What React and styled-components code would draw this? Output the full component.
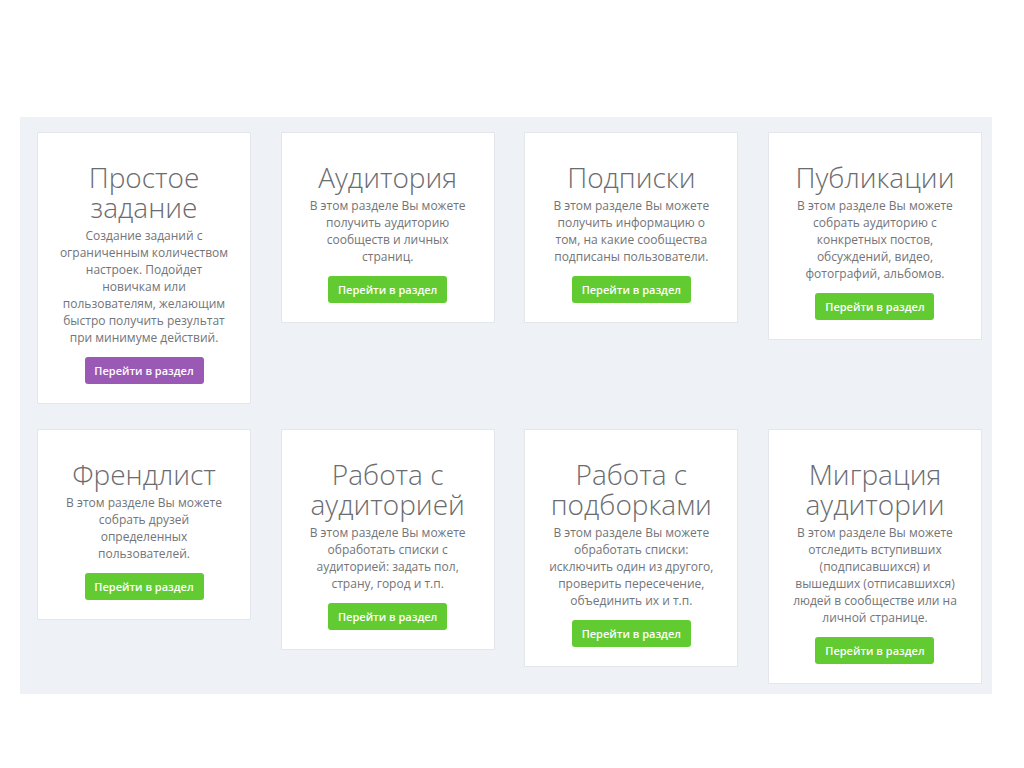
import React from 'react';
import styled, { createGlobalStyle, css } from 'styled-components';

const GlobalStyle = createGlobalStyle`
    html, body {
        margin: 0;
        padding: 0;
        background: #fff;
        font-family: "Open Sans", "Noto Sans", sans-serif;
    }
`;

const Page = styled.div`
    padding: 117px 32px 0 20px;
    width: 1024px;
    box-sizing: border-box;
`;

const Panel = styled.div`
    background: #eef1f6;
    box-sizing: border-box;
    width: 972px;
    padding: 15px 10px 10px 17px;
    display: grid;
    grid-template-columns: repeat(4, 214px);
    justify-content: space-between;
    align-items: start;
    row-gap: 25px;
`;

const Card = styled.div`
    background: #fff;
    border: 1px solid #e3e6eb;
    box-sizing: border-box;
    padding: 29px 8px 19px;
    display: flex;
    flex-direction: column;
    align-items: center;
    text-align: center;
`;

const Title = styled.h2`
    margin: 0;
    font-weight: 300;
    font-size: 28px;
    line-height: 30px;
    color: #6a6c6f;
`;

const Text = styled.p`
    margin: 5px 0 0;
    font-size: 12px;
    line-height: 17px;
    color: #727478;
`;

const Button = styled.button`
    margin-top: 11px;
    height: 27px;
    width: 119px;
    padding: 0;
    border: none;
    border-radius: 3px;
    font-family: inherit;
    font-size: 11px;
    font-weight: 600;
    color: #fff;
    background: #62cb31;
    cursor: pointer;

    ${props => props.$purple && css`
        background: #9b59b6;
    `}
`;

const cards = [
    {
        title: ['Простое', 'задание'],
        text: ['Создание заданий с', 'ограниченным количеством', 'настроек. Подойдет', 'новичкам или', 'пользователям, желающим', 'быстро получить результат', 'при минимуме действий.'],
        purple: true,
    },
    {
        title: ['Аудитория'],
        text: ['В этом разделе Вы можете', 'получить аудиторию', 'сообществ и личных', 'страниц.'],
    },
    {
        title: ['Подписки'],
        text: ['В этом разделе Вы можете', 'получить информацию о', 'том, на какие сообщества', 'подписаны пользователи.'],
    },
    {
        title: ['Публикации'],
        text: ['В этом разделе Вы можете', 'собрать аудиторию с', 'конкретных постов,', 'обсуждений, видео,', 'фотографий, альбомов.'],
    },
    {
        title: ['Френдлист'],
        text: ['В этом разделе Вы можете', 'собрать друзей', 'определенных', 'пользователей.'],
    },
    {
        title: ['Работа с', 'аудиторией'],
        text: ['В этом разделе Вы можете', 'обработать списки с', 'аудиторией: задать пол,', 'страну, город и т.п.'],
    },
    {
        title: ['Работа с', 'подборками'],
        text: ['В этом разделе Вы можете', 'обработать списки:', 'исключить один из другого,', 'проверить пересечение,', 'объединить их и т.п.'],
    },
    {
        title: ['Миграция', 'аудитории'],
        text: ['В этом разделе Вы можете', 'отследить вступивших', '(подписавшихся) и', 'вышедших (отписавшихся)', 'людей в сообществе или на', 'личной странице.'],
    },
];

const lines = (arr) => arr.map((line, i) => (
    <React.Fragment key={i}>
        {i > 0 && <br />}
        {line}
    </React.Fragment>
));

export default function App() {
    return (
        <>
            <GlobalStyle />
            <Page>
                <Panel>
                    {cards.map((card, key) => (
                        <Card key={key}>
                            <Title>{lines(card.title)}</Title>
                            <Text>{lines(card.text)}</Text>
                            <Button $purple={card.purple}>Перейти в раздел</Button>
                        </Card>
                    ))}
                </Panel>
            </Page>
        </>
    );
}
